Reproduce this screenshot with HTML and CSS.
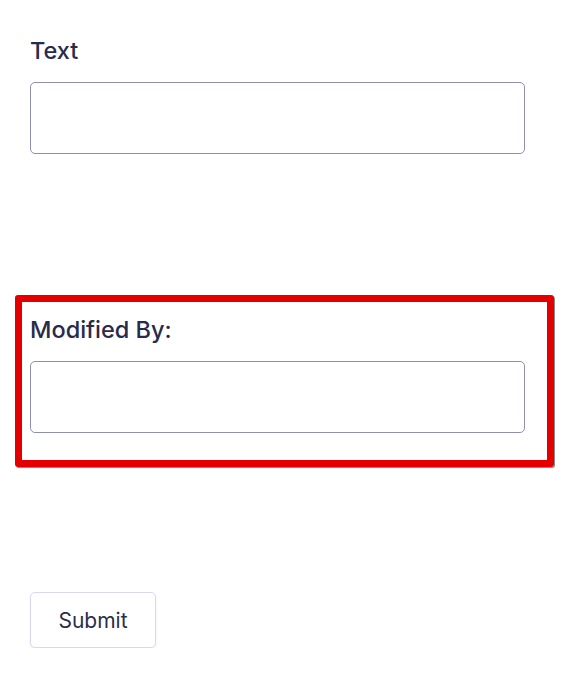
FILE: index.html
```html
<!DOCTYPE html>
<html lang="en">
<head>
<meta charset="utf-8">
<title>Form</title>
<link rel="stylesheet" href="styles.css">
</head>
<body>
<form class="form">
  <div class="field field-plain">
    <label class="label" for="text">Text</label>
    <input class="input" id="text" type="text">
  </div>
  <div class="field field-highlight">
    <label class="label" for="modified">Modified By:</label>
    <input class="input" id="modified" type="text">
  </div>
  <div class="actions">
    <button class="button" type="button">Submit</button>
  </div>
</form>
</body>
</html>
```
FILE: styles.css
```css
* { box-sizing: border-box; }
html, body { margin: 0; padding: 0; background: #ffffff; }
body {
  font-family: Inter, "Noto Sans", "Liberation Sans", sans-serif;
  color: #282b4c;
}
.form {
  display: flex;
  flex-direction: column;
  align-items: flex-start;
  padding: 37px 0 0 15px;
}
.field {
  display: flex;
  flex-direction: column;
}
.field-plain {
  margin-left: 15px;
}
.field-highlight {
  margin-top: 141px;
  width: 539px;
  border: 7px solid #e50000;
  border-radius: 3px;
  padding: 14px 8px 27px 8px;
  box-shadow: 1px 1px 0 #8a8a8a;
}
.label {
  font-size: 23.5px;
  line-height: 28px;
  font-weight: 500;
  color: #282b4c;
  margin-bottom: 17px;
}
.input {
  width: 495px;
  height: 72px;
  border: 1px solid #8d90b3;
  border-radius: 5px;
  background: #ffffff;
  font: inherit;
  padding: 0 12px;
}
.actions {
  margin-top: 125px;
  margin-left: 15px;
}
.button {
  width: 126px;
  height: 56px;
  background: #ffffff;
  border: 1px solid #d9d8f3;
  border-radius: 5px;
  box-shadow: 0 1px 2px rgba(40, 40, 90, 0.08);
  font-family: Inter, "Noto Sans", "Liberation Sans", sans-serif;
  font-size: 21px;
  font-weight: 400;
  color: #2b2d4e;
  padding: 0;
}
```
